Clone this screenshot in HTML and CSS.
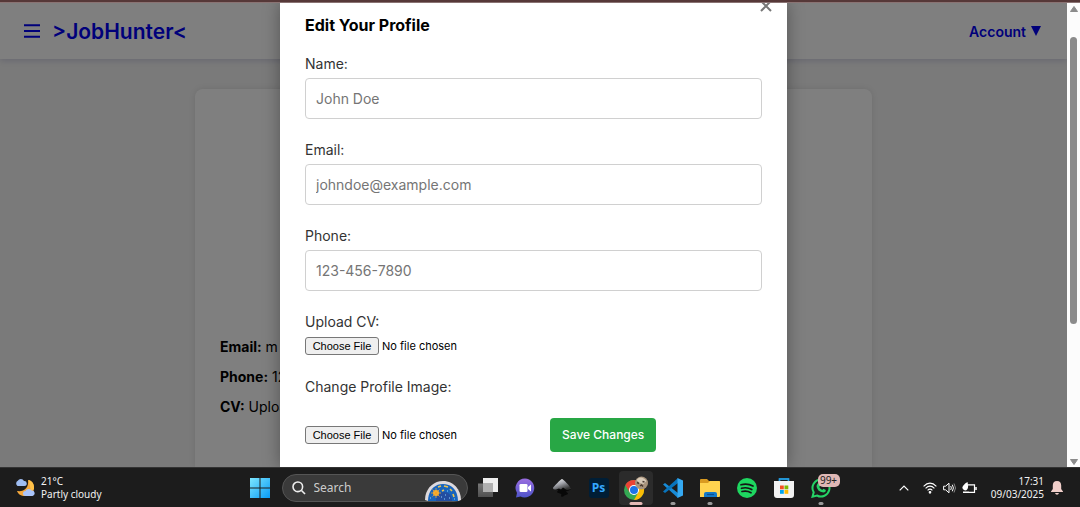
FILE: index.html
```html
<!DOCTYPE html>
<html lang="en">
<head>
<meta charset="utf-8">
<title>JobHunter - Profile</title>
<link rel="stylesheet" href="styles.css">
</head>
<body>
<div class="window-edge"></div>
<div class="viewport">
  <div class="page">
    <header class="header">
      <button class="menu-button" aria-label="Menu"><svg width="16" height="14" viewBox="0 0 16 14"><path d="M0 1.200h16M0 7h16M0 12.800h16" stroke="currentColor" stroke-width="2"/></svg></button>
      <a class="brand" href="#">&gt;JobHunter&lt;</a>
      <a class="account" href="#">Account <svg width="10" height="10" viewBox="0 0 10 10"><path d="M0 0h10L5 10z" fill="currentColor"/></svg></a>
    </header>
    <main class="main">
      <section class="card">
        <p><strong>Email:</strong> m</p>
        <p><strong>Phone:</strong> 12</p>
        <p><strong>CV:</strong> Uploa</p>
      </section>
    </main>
    <div class="overlay">
      <form class="modal">
        <button type="button" class="close" aria-label="Close"><svg width="12" height="12" viewBox="0 0 12 12"><path d="M1 1l10 10M11 1L1 11" stroke="currentColor" stroke-width="2"/></svg></button>
        <h2>Edit Your Profile</h2>
        <div class="field"><label for="name">Name:</label><input class="text" id="name" type="text" placeholder="John Doe"></div>
        <div class="field"><label for="email">Email:</label><input class="text" id="email" type="email" placeholder="johndoe@example.com"></div>
        <div class="field"><label for="phone">Phone:</label><input class="text" id="phone" type="tel" placeholder="123-456-7890"></div>
        <div class="field"><label for="cv">Upload CV:</label><input class="file" id="cv" type="file"></div>
        <label for="image">Change Profile Image:</label>
        <div class="actions"><input class="file" id="image" type="file"><button type="submit" class="save">Save Changes</button></div>
      </form>
    </div>
  </div>
  <div class="scrollbar">
    <svg width="8" height="6" viewBox="0 0 8 6"><path d="M4 0.500L7.500 5.500h-7z" fill="#8b8b8b" stroke="#8b8b8b" stroke-linejoin="round"/></svg>
    <div class="track"><div class="thumb"></div></div>
    <svg width="8" height="6" viewBox="0 0 8 6"><path d="M4 5.500L7.500 0.500h-7z" fill="#8b8b8b" stroke="#8b8b8b" stroke-linejoin="round"/></svg>
  </div>
</div>
<footer class="taskbar">
  <div class="weather">
    <svg width="21" height="20" viewBox="0 0 21 20"><path d="M14 2c3 0 6 3 6 8 0 5-4 8-9 8-4 0-7-2-8-5 7 1 12-3 11-11z" fill="#f5a83c"/><path d="M14.500 2c4 1 6 4 5.500 9l-3 2c-1-3-1-7-2.500-11z" fill="#ffc148"/><path d="M3.500 8a3 3 0 0 1 .3-5.200A3.500 3.500 0 0 1 10 3a2.500 2.500 0 0 1 .5 5z" fill="#9fbdf2"/><path d="M11.500 18a2.500 2.500 0 0 1 0-5 3.500 3.500 0 0 1 6-.5 2.800 2.800 0 0 1 1 5.500z" fill="#a9c4fa"/></svg>
    <div><div>21°C</div><div>Partly cloudy</div></div>
  </div>
  <div class="apps">
    <button class="app" aria-label="Start"><svg width="20" height="20" viewBox="0 0 20 20"><defs><linearGradient id="win" x1="0" y1="0" x2="1" y2="1"><stop offset="0" stop-color="#7de6ff"/><stop offset="1" stop-color="#089af5"/></linearGradient></defs><path d="M0 0h9.500v9.500H0zM10.500 0H20v9.500h-9.500zM0 10.500h9.500V20H0zM10.500 10.500H20V20h-9.500z" fill="url(#win)"/></svg></button>
    <label class="search">
      <svg width="14" height="14" viewBox="0 0 14 14" fill="none" stroke="#eee" stroke-width="1.600"><circle cx="5.800" cy="5.800" r="4.800"/><path d="M9.500 9.500L13 13"/></svg>
      <input type="search" placeholder="Search" aria-label="Search">
      <svg width="38" height="21" viewBox="0 0 38 21"><path d="M1 20C1 9 9 1 19 1s18 8 18 19l-3 1H4z" fill="#ddd9dc"/><path d="M4 21C4 11 10 4 19 4s15 7 15 17z" fill="#1864bd"/><path d="M12 21c0-6 3-9 8-9s8 4 8 9z" fill="#234da0"/><circle cx="12" cy="13" r="3" fill="#ffb52e"/><path d="M12 8v10M7 13h10M8.500 9.500l7 7M15.500 9.500l-7 7" stroke="#efa22d" stroke-width=".8"/><path d="M14 7l3-1M20 6l4 1M26 9l2 2M18 11l2-1M29 14l1 3" stroke="#ecc34c" stroke-width="1.600"/><path d="M6 18h1M17 17h1M21 15h1M25 18h1M30 19h1M23 11h1M20 19h1" stroke="#8ed3ff" stroke-width="1.200"/></svg>
    </label>
    <button class="app" aria-label="Task view"><svg width="20" height="19" viewBox="0 0 20 19"><defs><linearGradient id="tv" x1="0" y1="0" x2="0" y2="1"><stop offset="0" stop-color="#777"/><stop offset="1" stop-color="#505050"/></linearGradient></defs><path d="M5 0h15v14H5z" fill="#eee"/><path d="M0 5.500h15V19H0z" fill="url(#tv)"/><path d="M5 5.500h10V14H5z" fill="#b0b0b0"/></svg></button>
    <button class="app" aria-label="Chat"><svg width="20" height="20" viewBox="0 0 20 20"><defs><linearGradient id="chat" x1="0" y1="0" x2="0" y2="1"><stop offset="0" stop-color="#9a6de0"/><stop offset="1" stop-color="#4e54c9"/></linearGradient></defs><path d="M10 .5A9.500 9.500 0 1 1 5.500 18.500L1 19.500l1-4.500A9.500 9.500 0 0 1 10 .5z" fill="url(#chat)"/><rect x="4.500" y="6" width="8" height="8" rx="1.300" fill="#fff"/><path d="M13 9l3-2.500v7L13 11z" fill="#fff"/></svg></button>
    <button class="app" aria-label="Inkscape"><svg width="20" height="20" viewBox="0 0 20 20"><defs><linearGradient id="ink" x1="0" y1="0" x2=".6" y2="1"><stop offset="0" stop-color="#fff"/><stop offset=".5" stop-color="#a4a6ad"/><stop offset="1" stop-color="#333"/></linearGradient></defs><path d="M10 1c1 0 9 8 9 9.500 0 2-4 2-5 3 0 1 2 1 2 2 0 1.500-3 1-4 2.500-1 1-3 1-3 0s1-1 0-2-4-1-4-2 2-1 1-2-5 0-5-2C1 9 9 1 10 1z" fill="#080808"/><path d="M10 1c1 0 9 8 9 9.500 0 1-3 1.500-5 1l-3-2-2 2-2-1-3 1c-2 0-3-.5-3-1.500C1 9 9 1 10 1z" fill="url(#ink)"/></svg></button>
    <button class="app" aria-label="Photoshop"><span class="ps">Ps</span></button>
    <button class="app active" aria-label="Chrome"><svg width="26" height="26" viewBox="0 0 26 26"><circle cx="11" cy="15" r="10" fill="#34a853"/><path d="M2.300 10A10 10 0 0 1 19.700 10H11l-4.300 7.500z" fill="#ea4335"/><path d="M19.700 10A10 10 0 0 1 11 25l4.300-7.500L11 10z" fill="#fbbc05"/><circle cx="11" cy="15" r="5" fill="#fff"/><circle cx="11" cy="15" r="4" fill="#1a73e8"/><circle cx="18.500" cy="8" r="6.500" fill="#a8937c"/><path d="M13.500 5c3-4 7-3 10 1l-3 3-4-1z" fill="#d9cbb9"/><path d="M14 7.500l2 1M19.500 6.500l2 .5M17 11l1.500-1 1.500 1.500" fill="none" stroke="#493a30" stroke-width="1.500"/></svg></button>
    <button class="app running" aria-label="Visual Studio Code"><svg width="20" height="20" viewBox="0 0 20 20"><path d="M0 6.500l2-1.500L15 15v5z" fill="#188bd6"/><path d="M0 13.500L2 15 15 5V0z" fill="#0874bd"/><path d="M14.500 0L20 2.500v15L14.500 20z" fill="#35a9f2"/></svg></button>
    <button class="app running" aria-label="File Explorer"><svg width="22" height="20" viewBox="0 0 22 20"><path d="M1 2q0-1 1-1h6l2 2h10q1 0 1 1v6H1z" fill="#d99a20"/><path d="M1 5h8l2-2h9q1 0 1 1v14q0 1-1 1H1z" fill="#ffd34f"/><path d="M5 19v-3q0-2 2-2h9q2 0 2 2v3z" fill="#1379c8"/><path d="M8 16.500h7" stroke="#0c4f91" stroke-width="1.200"/></svg></button>
    <button class="app" aria-label="Spotify"><svg width="20" height="20" viewBox="0 0 20 20"><circle cx="10" cy="10" r="10" fill="#1ed760"/><path d="M4 6.800q6.500-1.700 12 1.300M4.500 10.300q5.500-1.500 10.300 1.200M5 13.500q5-1.200 9 1.200" fill="none" stroke="#151515" stroke-width="1.700" stroke-linecap="round"/></svg></button>
    <button class="app" aria-label="Microsoft Store"><svg width="20" height="20" viewBox="0 0 20 20"><path d="M5.500 5V1h9v4" fill="none" stroke="#259de0" stroke-width="1.400"/><path d="M0 3h20v14q0 3-3 3H3q-3 0-3-3z" fill="#f2f2f2"/><path d="M5.500 3V1h9v2" fill="none" stroke="#259de0" stroke-width="1.400"/><path d="M6 7.500h3.800v3.800H6z" fill="#f25022"/><path d="M10.500 7.500h3.800v3.800h-3.800z" fill="#7fba00"/><path d="M6 12h3.800v3.800H6z" fill="#00a4ef"/><path d="M10.500 12h3.800v3.800h-3.800z" fill="#ffb900"/></svg></button>
    <button class="app running" aria-label="WhatsApp"><svg width="20" height="20" viewBox="0 0 20 20"><path d="M10 1.500a8.500 8.500 0 1 1-4 16L1.500 18.700l1.200-4.400A8.500 8.500 0 0 1 10 1.500z" fill="none" stroke="#25d366" stroke-width="2"/><path d="M6.500 5.500l1.500-.3 1.200 2.600-1 1.200q1 2 3 2.900l1.200-1.200 2.500 1.200q0 2.500-2.500 2.600Q6 13.500 5.500 8z" fill="#25d366"/></svg><span class="badge">99+</span></button>
  </div>
  <div class="tray">
    <svg width="10" height="6" viewBox="0 0 10 6"><path d="M.7 5.300L5 1l4.300 4.300" fill="none" stroke="#fff" stroke-width="1.200"/></svg>
    <div class="status">
      <svg width="14" height="12" viewBox="0 0 14 12" fill="none" stroke="#fff" stroke-width="1.100"><path d="M.6 4.300Q7-2 13.400 4.300"/><path d="M2.600 6.300q4.400-4.200 8.800 0"/><path d="M4.600 8.300q2.400-2.300 4.800 0"/><circle cx="7" cy="10.300" r=".8" fill="#fff"/></svg>
      <svg width="13" height="12" viewBox="0 0 13 12" fill="none" stroke="#fff"><path d="M.6 4.200h2L6 1.200v9.600L2.600 7.800h-2z"/><path d="M7.700 4q1.300 2 0 4M9.300 2.700q2.200 3.300 0 6.600"/><path d="M11 1.500q3 4.500 0 9" stroke="#888"/></svg>
      <svg width="15" height="12" viewBox="0 0 15 12"><path d="M6 2.800h6.500v7.500H7" fill="none" stroke="#fff" stroke-width="1.200"/><path d="M14 5v3" stroke="#fff" stroke-width="1.500"/><path d="M5.500 0q2 8-2.500 8.500Q-1 7 1 4q2-3 4.500-4zM1 9.500h6V11H1z" fill="#fff"/></svg>
    </div>
    <div class="clock"><div>17:31</div><div>09/03/2025</div></div>
    <svg width="12" height="14" viewBox="0 0 12 14"><path d="M6 0C3 0 1.800 2 1.800 4.500V8L0 10.500v.5h12v-.5L10.200 8V4.500C10.200 2 9 0 6 0zM4 12h4q-.5 1.700-2 1.700T4 12z" fill="#f1cfca"/></svg>
  </div>
</footer>
</body>
</html>
```
FILE: styles.css
```css
* { box-sizing: border-box; }
body {
  margin: 0;
  height: 100vh;
  display: flex;
  flex-direction: column;
  overflow: hidden;
  font-family: Inter, sans-serif;
  font-size: 14px;
}
button { font: inherit; border: 0; padding: 0; background: none; color: inherit; }
svg { flex: none; }
.window-edge { height: 3px; background: #563838; border-bottom: 1px solid #8a7373; }
.viewport { flex: 1; min-height: 0; display: flex; }
.page { position: relative; flex: 1; display: flex; flex-direction: column; overflow: hidden; background: #f4f4f4; }
.header {
  display: flex;
  align-items: center;
  height: 56px;
  padding: 0 26px 0 24px;
  background: #fff;
  color: #0000f5;
  box-shadow: 0 2px 6px rgba(0, 0, 120, .14);
}
.menu-button { display: flex; margin-right: 12px; }
.brand, .account { color: inherit; text-decoration: none; }
.brand { font-size: 21px; font-weight: 600; }
.account { display: flex; align-items: center; gap: 5px; margin-left: auto; font-weight: 600; }
.main { flex: 1; display: flex; justify-content: center; padding: 30px 195px 0; }
.card {
  flex: 1;
  padding: 243px 25px 0;
  border-radius: 8px 8px 0 0;
  background: #fff;
  box-shadow: 0 0 6px rgba(0, 0, 0, .1);
}
.card p { margin: 0; line-height: 30px; }
.card strong { font-weight: 700; }
.overlay {
  position: absolute;
  inset: 0;
  display: flex;
  justify-content: center;
  background: rgba(0, 0, 0, .5);
}
.modal {
  position: relative;
  width: 507px;
  padding: 8px 25px 0;
  background: #fff;
  box-shadow: 0 0 16px rgba(0, 0, 0, .35);
}
.close { position: absolute; top: -3px; right: 15px; display: flex; color: #777; }
.modal h2 { margin: 0 0 13px; font-size: 16px; line-height: 28px; font-weight: 700; }
.modal label { display: block; line-height: 24px; color: #333; }
.field { display: flex; flex-direction: column; gap: 2px; margin-bottom: 19px; }
.text {
  width: 100%;
  height: 41px;
  padding: 0 10px;
  border: 1px solid #d0d0d0;
  border-radius: 4px;
  font: inherit;
}
.text::placeholder { color: #757575; }
.file { height: 20px; width: 245px; font-family: inherit; font-size: 11px; }
.file::file-selector-button {
  height: 18px;
  width: 74px;
  margin: 1px 3px 0 0;
  padding: 0;
  border: 1px solid #777;
  border-radius: 3px;
  background: #efefef;
  font: 11px "Liberation Sans", sans-serif;
}
.actions { display: flex; align-items: center; margin-top: 19px; }
.save { padding: 0 12px; line-height: 34px; border-radius: 4px; background: #28a745; color: #fff; font-size: 12px; font-weight: 500; }
.scrollbar { display: flex; flex-direction: column; align-items: center; width: 13px; padding: 3px 0 2px; background: #fcfcfc; }
.track { flex: 1; display: flex; padding: 25px 0 0; }
.thumb { width: 7px; height: 68%; min-height: 20px; border-radius: 4px; background: #8b8b8b; }
.taskbar {
  display: grid;
  grid-template-columns: 1fr auto 1fr;
  align-items: center;
  height: 40px;
  border-top: 1px solid #333;
  background: #1c1c1c;
  color: #f2f2f2;
  font-family: "Noto Sans", sans-serif;
  font-size: 10px;
  line-height: 13px;
}
.weather { display: flex; align-items: center; gap: 6px; padding-left: 14px; }
.apps { display: flex; align-items: center; gap: 3px; }
.app { position: relative; display: flex; align-items: center; justify-content: center; width: 34px; height: 34px; }
.search {
  display: flex;
  align-items: center;
  gap: 8px;
  width: 186px;
  height: 28px;
  margin-left: 2px;
  padding: 0 5px 0 9px;
  border: 1px solid #555;
  border-radius: 14px;
  background: #3a3a3a;
}
.search input { flex: 1; min-width: 0; padding: 0; border: 0; background: none; color: #fff; font: 12px "Noto Sans", sans-serif; }
.search input::placeholder { color: #ccc; }
.search svg:last-child { align-self: flex-end; }
.ps { width: 20px; border-radius: 3px; background: #001e36; color: #35a8ff; font: 700 12px/20px "Open Sans", sans-serif; }
.active { border-radius: 4px; background: #2b2b2b; }
.active::after, .running::after {
  content: "";
  position: absolute;
  bottom: 0;
  left: 50%;
  width: 5px;
  height: 3px;
  transform: translateX(-50%);
  border-radius: 2px;
  background: #999;
}
.active::after { width: 13px; background: #e5b9b6; }
.badge { position: absolute; top: 3px; left: 14px; width: 22px; border-radius: 5px; background: #dfb8b5; color: #222; line-height: 13px; }
.tray { display: flex; align-items: center; justify-content: flex-end; padding-right: 17px; gap: 7px; }
.status { display: flex; gap: 6px; margin: 0 7px; }
.clock { text-align: right; }
```
